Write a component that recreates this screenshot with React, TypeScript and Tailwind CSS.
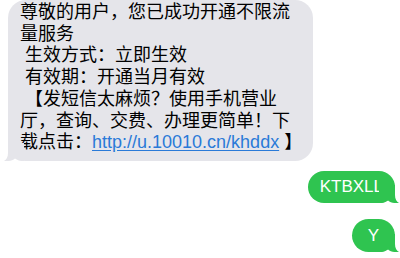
import React from "react";

const lines = [
  "尊敬的用户，您已成功开通不限流",
  "量服务",
  " 生效方式：立即生效",
  " 有效期：开通当月有效",
  " 【发短信太麻烦？使用手机营业",
  "厅，查询、交费、办理更简单！下",
];

function Tail({ color, flip }: { color: string; flip?: boolean }) {
  return (
    <svg
      width="20"
      height="20"
      viewBox="0 0 20 20"
      className={flip ? "absolute bottom-0 left-[-4px] -scale-x-100" : "absolute bottom-0 right-[-4px]"}
    >
      <path d="M16 2 L16 12 C16 16 17.5 18.8 20 20 C15.5 20.6 11.5 19.4 9 17.4 C7 19 4 20 0 20 L0 2 Z" fill={color} />
    </svg>
  );
}

export default function App() {
  return (
    <div className="w-[400px] h-[258px] overflow-hidden bg-white flex flex-col" style={{ fontFamily: '"Liberation Sans", "Noto Sans CJK SC", sans-serif' }}>
      <div className="relative ml-[8px] w-[305px] rounded-[18px] bg-[#e5e5ea] pl-[12px] pt-[2px] pb-[7px] text-[18px] leading-[21.7px] text-black">
        {lines.map((l, i) => (
          <div key={i} className="whitespace-pre">{l}</div>
        ))}
        <div className="whitespace-pre">
          载点击：<span className="text-[#2a7ad8] underline underline-offset-[2px]">http://u.10010.cn/khddx</span> 】
        </div>
        <Tail color="#e5e5ea" flip />
      </div>

      <div className="relative self-end mr-[5px] mt-[10px] h-[32px] rounded-[16px] bg-[#2fc450] px-[12px] flex items-center text-white text-[17px]">
        KTBXLL
        <Tail color="#2fc450" />
      </div>

      <div className="relative self-end mr-[5px] mt-[16px] h-[33px] w-[43px] rounded-[17px] bg-[#2fc450] flex items-center justify-center text-white text-[17px]">
        Y
        <Tail color="#2fc450" />
      </div>
    </div>
  );
}
